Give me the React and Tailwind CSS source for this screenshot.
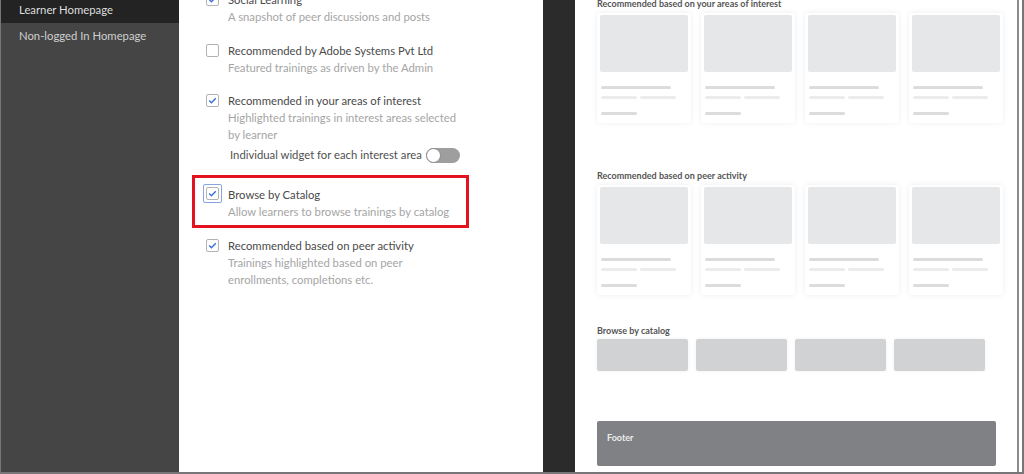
import React from 'react';

const font = { fontFamily: 'Lato, "Open Sans", sans-serif' };

function CheckBox({ checked }) {
  return (
    <span className="flex h-[13px] w-[13px] items-center justify-center rounded-[2px] border border-[#b3b3b3] bg-white">
      {checked && (
        <svg width="11" height="11" viewBox="0 0 11 11">
          <polyline points="2.2,5.6 4.4,7.8 8.8,3.2" fill="none" stroke="#3a6fd8" strokeWidth="1.4" />
        </svg>
      )}
    </span>
  );
}

function Option({ checked, title, desc, className = '' }) {
  return (
    <div className={`flex ${className}`}>
      <div className="mt-[2px] shrink-0">
        <CheckBox checked={checked} />
      </div>
      <div className="ml-[9px] whitespace-nowrap text-[11.3px] leading-[17px]">
        <div className="text-[#4a4a4a]">{title}</div>
        <div className="text-[#a5a5a5]">{desc}</div>
      </div>
    </div>
  );
}

function Card() {
  return (
    <div className="h-[110px] w-[94px] rounded-[2px] bg-white p-[3px] pt-[2px] shadow-[0_0_6px_rgba(0,0,0,0.07)]">
      <div className="h-[57px] rounded-[2px] bg-[#e6e7e8]" />
      <div className="ml-[1px] mt-[14px] h-[3px] w-[70px] rounded-full bg-[#dcdcdc]" />
      <div className="ml-[1px] mt-[7px] flex gap-[3px]">
        <div className="h-[3px] w-[36px] rounded-full bg-[#ececec]" />
        <div className="h-[3px] w-[36px] rounded-full bg-[#ececec]" />
      </div>
      <div className="ml-[1px] mt-[13px] h-[3px] w-[36px] rounded-full bg-[#dcdcdc]" />
    </div>
  );
}

function CardRow() {
  return (
    <div className="flex gap-[10px]">
      <Card />
      <Card />
      <Card />
      <Card />
    </div>
  );
}

function SectionTitle({ children, className = '' }) {
  return (
    <div className={`h-[12px] text-[9px] font-bold leading-[12px] text-[#555] ${className}`}>{children}</div>
  );
}

export default function App() {
  return (
    <div
      className="flex h-[474px] w-[1024px] overflow-hidden border-b-2 border-l border-r-2 border-[#777] bg-white"
      style={font}
    >
      {/* sidebar */}
      <div className="w-[178px] shrink-0 bg-[#454545] text-[11.3px]">
        <div className="-mt-[3px] flex h-[26px] items-center bg-[#232323] pl-[18px] text-[#dedede]">
          Learner Homepage
        </div>
        <div className="flex h-[26px] items-center pl-[18px] text-[#cfcfcf]">Non-logged In Homepage</div>
      </div>

      {/* settings */}
      <div className="w-[364px] shrink-0 bg-white pl-[27px]">
        <div className="-mt-[9px]">
          <Option checked title="Social Learning" desc="A snapshot of peer discussions and posts" />
          <Option
            className="mt-[17px]"
            title="Recommended by Adobe Systems Pvt Ltd"
            desc="Featured trainings as driven by the Admin"
          />
          <Option
            checked
            className="mt-[16px]"
            title="Recommended in your areas of interest"
            desc={
              <>
                Highlighted trainings in interest areas selected
                <br />
                by learner
              </>
            }
          />
          <div className="ml-[24px] mt-[2px] flex h-[20px] items-center gap-[4px] text-[11.3px] text-[#505050]">
            <span className="whitespace-nowrap">Individual widget for each interest area</span>
            <span className="relative h-[15px] w-[34px] rounded-full bg-[#9e9e9e]">
              <span className="absolute left-0 top-0 h-[15px] w-[15px] rounded-full border border-[#8a8a8a] bg-white" />
            </span>
          </div>

          <div className="-ml-[14px] mt-[10px] flex w-[277px] border-[3px] border-[#e3121e] pb-[5px] pl-[8px] pt-[8px]">
            <span className="-mt-[2px] flex h-[19px] w-[19px] shrink-0 items-center justify-center rounded-[2px] border border-[#86a4e4]">
              <CheckBox checked />
            </span>
            <div className="ml-[6px] whitespace-nowrap text-[11.3px] leading-[17px]">
              <div className="text-[#4a4a4a]">Browse by Catalog</div>
              <div className="text-[#a5a5a5]">Allow learners to browse trainings by catalog</div>
            </div>
          </div>

          <Option
            checked
            className="mt-[9px]"
            title="Recommended based on peer activity"
            desc={
              <>
                Trainings highlighted based on peer
                <br />
                enrollments, completions etc.
              </>
            }
          />
        </div>
      </div>

      {/* divider strip */}
      <div className="w-[32px] shrink-0 bg-[#2b2b2b]" />

      {/* preview */}
      <div className="w-[444px] shrink-0 border-r-2 border-[#8c8c8c] bg-white pl-[22px]">
        <SectionTitle className="-mt-[2px]">Recommended based on your areas of interest</SectionTitle>
        <div className="mt-[3px]">
          <CardRow />
        </div>

        <SectionTitle className="mt-[47px]">Recommended based on peer activity</SectionTitle>
        <div className="mt-[3px]">
          <CardRow />
        </div>

        <SectionTitle className="mt-[30px]">Browse by catalog</SectionTitle>
        <div className="mt-[2px] flex gap-[8px]">
          {[0, 1, 2, 3].map((i) => (
            <div key={i} className="h-[32px] w-[91px] rounded-[2px] bg-[#d1d2d4] shadow-[0_0_4px_rgba(0,0,0,0.06)]" />
          ))}
        </div>

        <div className="mt-[50px] h-[45px] w-[399px] rounded-[2px] bg-[#808184] pl-[10px] pt-[11px] text-[9px] font-bold leading-[12px] text-[#ececec]">
          Footer
        </div>
      </div>
    </div>
  );
}
